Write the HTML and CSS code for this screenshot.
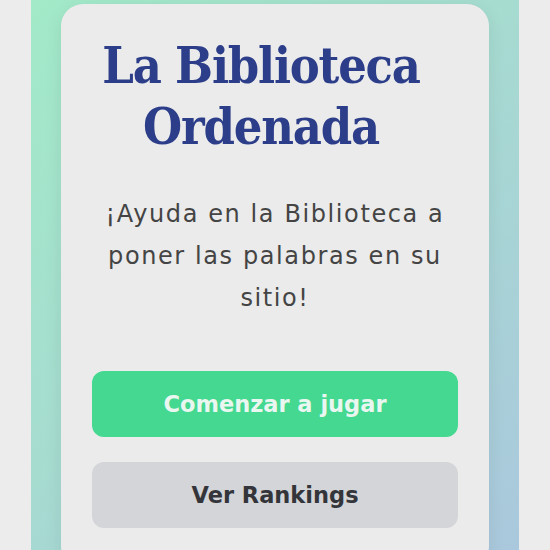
FILE: index.html
```html
<!DOCTYPE html>
<html lang="es">
<head>
<meta charset="utf-8">
<title>La Biblioteca Ordenada</title>
<link rel="stylesheet" href="styles.css">
</head>
<body>
<div class="stage">
  <main class="card">
    <h1 class="title">La Biblioteca Ordenada</h1>
    <p class="lead">¡Ayuda en la Biblioteca a poner las palabras en su sitio!</p>
    <div class="actions">
      <button class="btn btn-primary">Comenzar a jugar</button>
      <button class="btn btn-secondary">Ver Rankings</button>
    </div>
  </main>
</div>
</body>
</html>
```
FILE: styles.css
```css
html, body {
  margin: 0;
  padding: 0;
  background: #ececec;
  height: 100%;
}
body {
  display: flex;
  justify-content: center;
  overflow: hidden;
}
.stage {
  width: 488px;
  min-height: 100%;
  box-sizing: border-box;
  padding: 4px 30px 0 30px;
  background: linear-gradient(135deg, #a2eac8 0%, #a6dcd0 45%, #aac8dd 100%);
}
.card {
  background: #ebebeb;
  border-radius: 22px;
  padding: 31px 31px 40px;
  box-shadow: 0 4px 18px rgba(0,0,0,0.08);
  text-align: center;
  font-family: "DejaVu Sans", sans-serif;
}
.title {
  margin: 0;
  padding-right: 28px;
  font-family: "DejaVu Serif", serif;
  font-stretch: semi-condensed;
  font-weight: bold;
  font-size: 50px;
  line-height: 61px;
  color: #2c3e89;
  letter-spacing: -1.2px;
}
.lead {
  margin: 36px 0 0;
  font-size: 24px;
  line-height: 42px;
  letter-spacing: 1.6px;
  color: #444;
}
.actions {
  display: flex;
  flex-direction: column;
  gap: 25px;
  margin-top: 52px;
}
.btn {
  height: 66px;
  border: none;
  border-radius: 12px;
  font-family: "DejaVu Sans", sans-serif;
  font-weight: bold;
  font-size: 22.5px;
}
.btn-primary {
  background: #44d890;
  color: #eaf6f0;
}
.btn-secondary {
  background: #d4d5d9;
  color: #34353a;
}
```
